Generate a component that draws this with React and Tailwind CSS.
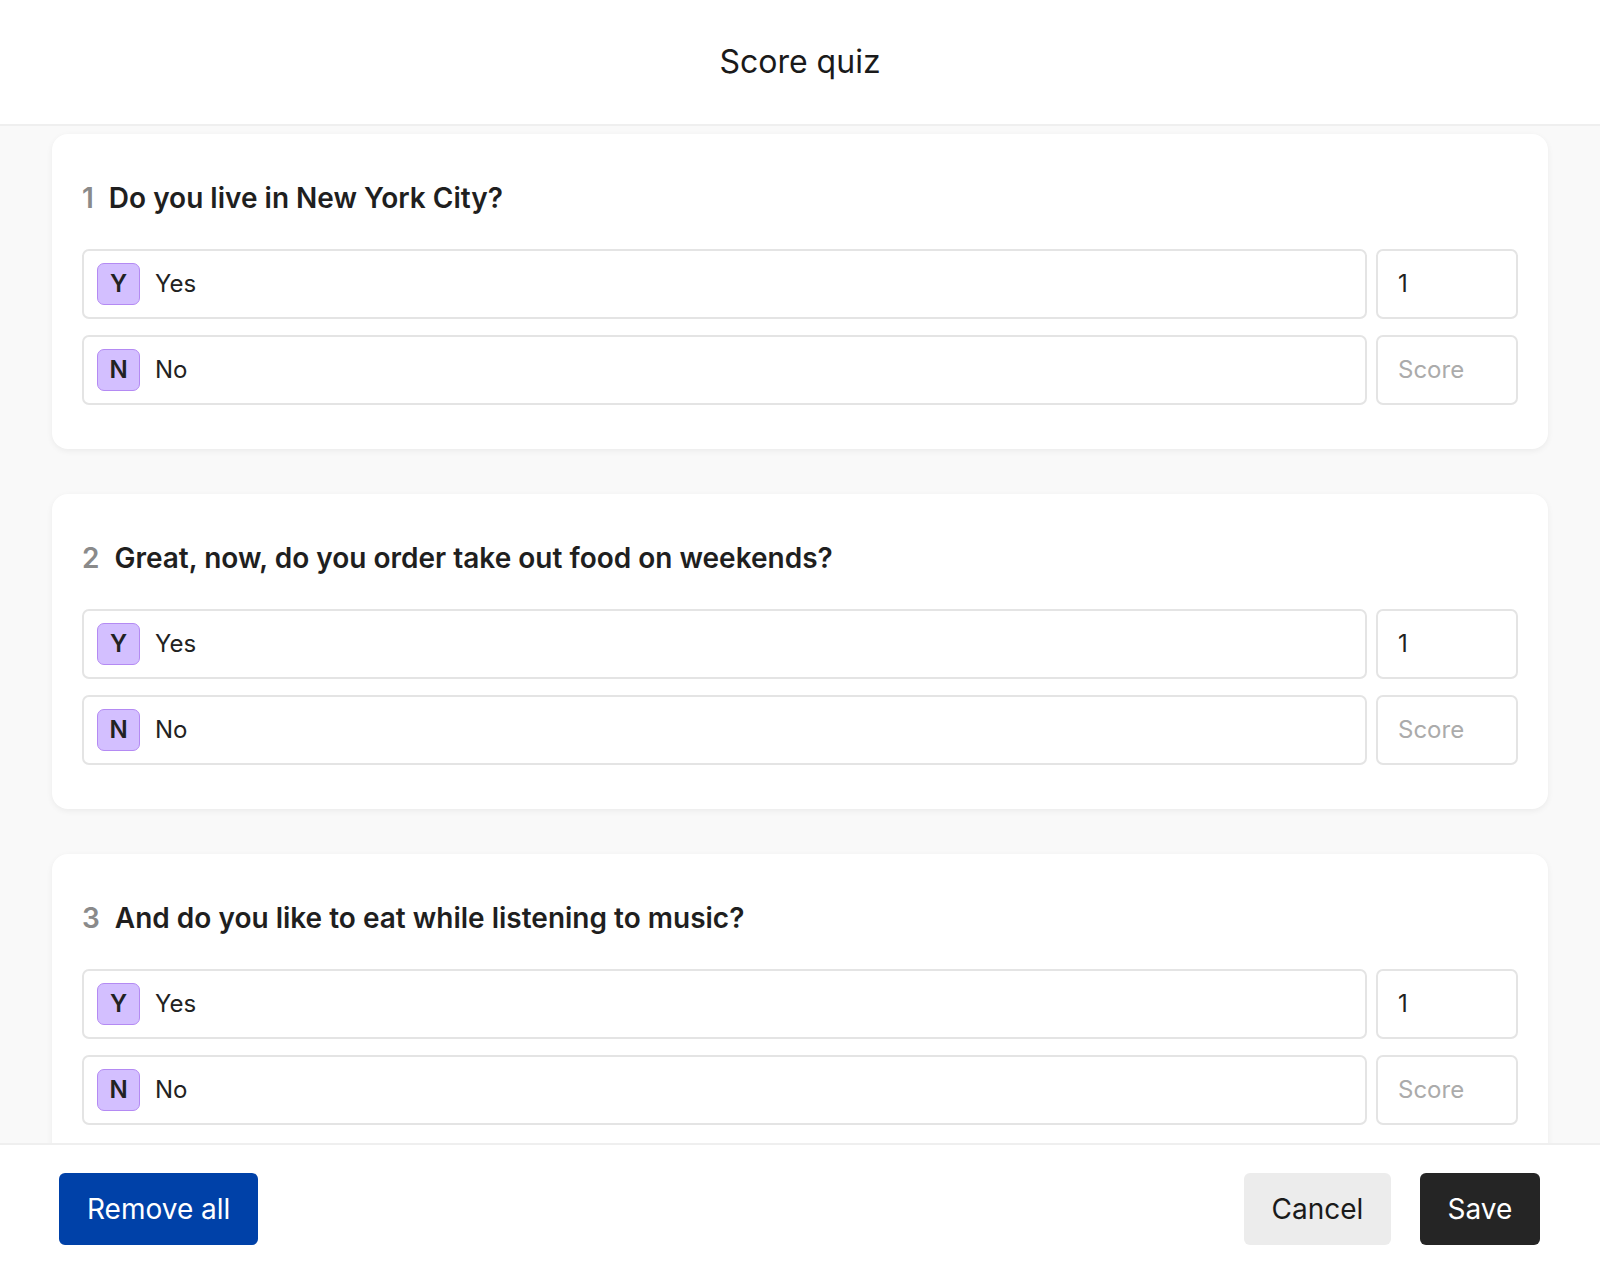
import React from 'react';

const questions = [
  { id: 1, title: 'Do you live in New York City?' },
  { id: 2, title: 'Great, now, do you order take out food on weekends?' },
  { id: 3, title: 'And do you like to eat while listening to music?' },
];

const answers = [
  { key: 'Y', label: 'Yes', score: '1' },
  { key: 'N', label: 'No', score: '' },
];

const AnswerRow = ({ answer }) => (
  <div className="flex gap-[9px]">
    <div className="flex-1 h-[70px] flex items-center px-[13px] bg-white border-2 border-[#e4e4e4] rounded-[7px]">
      <div className="w-[43px] h-[42px] flex items-center justify-center rounded-[7px] bg-[#d3bfff] border border-[#b48af3] text-[24px] font-semibold text-[#222]">
        {answer.key}
      </div>
      <span className="ml-[15px] text-[24px] text-[#222]">{answer.label}</span>
    </div>
    <div className="w-[142px] h-[70px] flex items-center px-[20px] bg-white border-2 border-[#e4e4e4] rounded-[7px]">
      {answer.score ? (
        <span className="text-[24px] text-[#222]">{answer.score}</span>
      ) : (
        <span className="text-[24px] text-[#ababab]">Score</span>
      )}
    </div>
  </div>
);

const QuestionCard = ({ question }) => (
  <div className="bg-white rounded-[16px] shadow-[0_2px_6px_rgba(0,0,0,0.06)] pt-[46px] px-[30px] pb-[44px]">
    <div className="h-[36px] flex items-center text-[28px] font-semibold text-[#1f1f1f]">
      <span className="text-[#8a8a8a] mr-[15px]">{question.id}</span>
      <span>{question.title}</span>
    </div>
    <div className="mt-[33px] flex flex-col gap-[16px]">
      {answers.map((a) => (
        <AnswerRow key={a.key} answer={a} />
      ))}
    </div>
  </div>
);

export default function App() {
  return (
    <div className="w-[1600px] h-[1266px] flex flex-col bg-white font-['Inter','Noto_Sans',sans-serif]">
      {/* Header */}
      <div className="h-[126px] shrink-0 flex items-center justify-center border-b-2 border-[#efefef]">
        <h1 className="text-[32px] text-[#1a1a1a] font-normal">Score quiz</h1>
      </div>

      {/* Questions */}
      <div className="flex-1 overflow-hidden bg-[#f9f9f9] px-[52px] pt-[8px]">
        <div className="flex flex-col gap-[45px]">
          {questions.map((q) => (
            <QuestionCard key={q.id} question={q} />
          ))}
        </div>
      </div>

      {/* Footer */}
      <div className="h-[123px] shrink-0 flex items-center justify-between border-t-2 border-[#efefef] pl-[59px] pr-[60px] pt-[6px]">
        <button className="h-[72px] px-[28px] rounded-[6px] bg-[#0041a8] text-white text-[28px]">
          Remove all
        </button>
        <div className="flex gap-[29px]">
          <button className="h-[72px] w-[147px] rounded-[6px] bg-[#ececec] text-[#1a1a1a] text-[28px]">
            Cancel
          </button>
          <button className="h-[72px] w-[120px] rounded-[6px] bg-[#252525] text-white text-[28px]">
            Save
          </button>
        </div>
      </div>
    </div>
  );
}
